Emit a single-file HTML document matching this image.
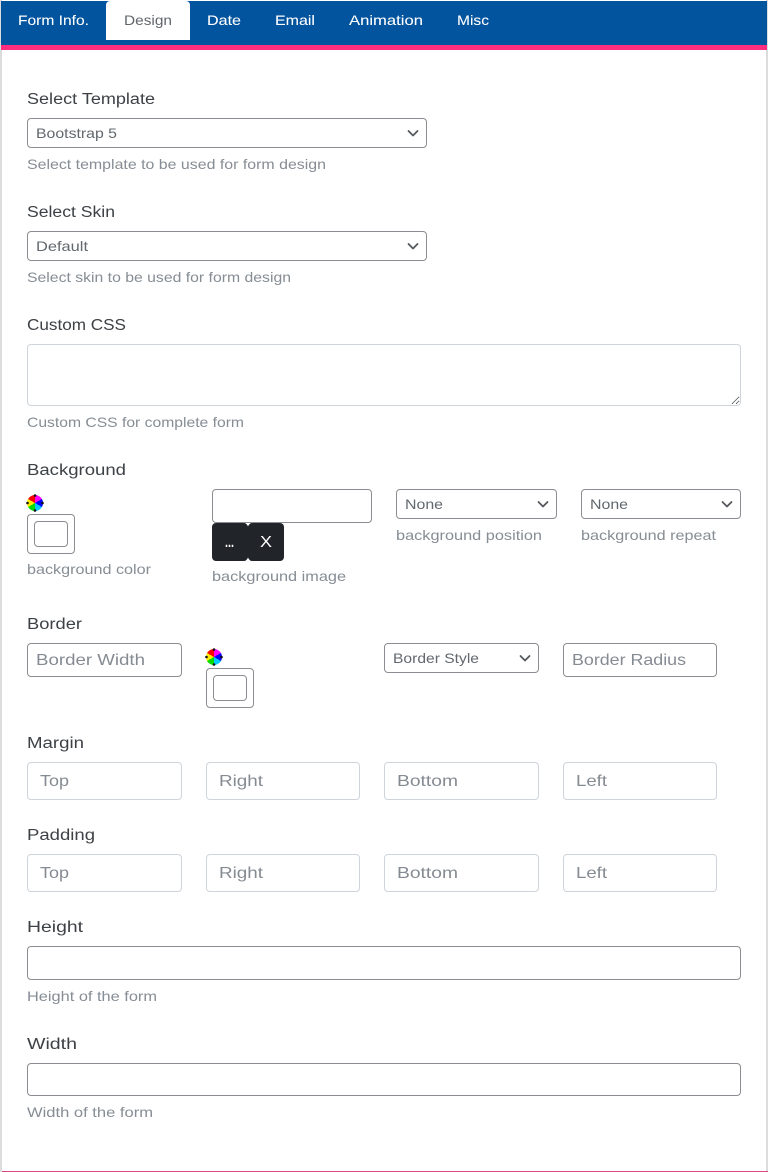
<!DOCTYPE html>
<html lang="en">
<head>
<meta charset="utf-8">
<title>Form Design</title>
<style>
html,body{margin:0;padding:0;background:#fff}
#p{position:relative;width:768px;height:1172px;overflow:hidden;background:#fff}
#p div,#p textarea{position:absolute;box-sizing:border-box}
.c{border:1px solid #8a8d91;border-radius:4px;background:#fff}
.l{border:1px solid #ced4da;border-radius:4px;background:#fff}
.w{width:16px;height:16px;border-radius:50%;background:conic-gradient(#f0f 0 60deg,#00f 60deg 120deg,#0cf 120deg 180deg,#0d0 180deg 240deg,#fe0 240deg 300deg,#f00 300deg 360deg)}
svg{position:absolute;left:0;top:0}
text{font-family:"Liberation Sans",sans-serif}
.lb{font-size:15.5px;fill:#3d4145}
.h{font-size:14px;fill:#868d94}
.t{font-size:14px;fill:#fff;stroke:#fff;stroke-width:.05px}
.s{font-size:14px;fill:#62686e}
.ph{font-size:16px;fill:#858b92}
</style>
</head>
<body>
<div id="p">
<div style="left:0;top:0;width:768px;height:1172px;border-left:2px solid #dcdcdc;border-right:2px solid #dcdcdc"></div>
<div style="left:2px;top:1171px;width:766px;height:1px;background:#d9487f"></div>
<div style="left:1px;top:1px;width:766px;height:44px;background:#03549e"></div>
<div style="left:1px;top:45px;width:766px;height:5px;background:#ff2e7e"></div>
<div style="left:106px;top:1px;width:84px;height:39px;background:#fff;border-radius:4px 4px 0 0"></div>

<div class="c" style="left:27px;top:118px;width:400px;height:30px"></div>
<div class="c" style="left:27px;top:231px;width:400px;height:30px"></div>
<textarea style="left:27px;top:344px;width:714px;height:62px;border:1px solid #ced4da;border-radius:4px;background:#fff;outline:0;margin:0"></textarea>

<div class="c" style="left:27px;top:514px;width:48px;height:40px"></div>
<div class="c" style="left:34px;top:521px;width:34px;height:26px"></div>
<div class="w" style="left:27px;top:495px"></div>
<div class="c" style="left:212px;top:489px;width:160px;height:34px"></div>
<div style="left:212px;top:523px;width:36px;height:38px;background:#212529;border-radius:4px"></div>
<div style="left:248px;top:523px;width:36px;height:38px;background:#212529;border-radius:4px"></div>
<div class="c" style="left:396px;top:489px;width:161px;height:30px"></div>
<div class="c" style="left:581px;top:489px;width:160px;height:30px"></div>

<div class="c" style="left:27px;top:643px;width:155px;height:34px"></div>
<div class="c" style="left:206px;top:668px;width:48px;height:40px"></div>
<div class="c" style="left:213px;top:675px;width:34px;height:26px"></div>
<div class="w" style="left:206px;top:649px"></div>
<div class="c" style="left:384px;top:643px;width:155px;height:30px"></div>
<div class="c" style="left:563px;top:643px;width:154px;height:34px"></div>

<div class="l" style="left:27px;top:762px;width:155px;height:38px"></div>
<div class="l" style="left:206px;top:762px;width:154px;height:38px"></div>
<div class="l" style="left:384px;top:762px;width:155px;height:38px"></div>
<div class="l" style="left:563px;top:762px;width:154px;height:38px"></div>
<div class="l" style="left:27px;top:854px;width:155px;height:38px"></div>
<div class="l" style="left:206px;top:854px;width:154px;height:38px"></div>
<div class="l" style="left:384px;top:854px;width:155px;height:38px"></div>
<div class="l" style="left:563px;top:854px;width:154px;height:38px"></div>

<div class="c" style="left:27px;top:946px;width:714px;height:34px"></div>
<div class="c" style="left:27px;top:1063px;width:714px;height:33px"></div>

<svg width="768" height="1172" viewBox="0 0 768 1172" style="pointer-events:none">
<g fill="none" stroke="#555a5f" stroke-width="1.800" stroke-linecap="round" stroke-linejoin="round">
<path d="M408.500 131l4.500 4.500 4.500-4.500"/>
<path d="M408.500 244l4.500 4.500 4.500-4.500"/>
<path d="M538.500 502l4.500 4.500 4.500-4.500"/>
<path d="M722.500 502l4.500 4.500 4.500-4.500"/>
<path d="M520.500 656l4.500 4.500 4.500-4.500"/>
</g>
<g fill="#111">
<circle cx="35" cy="495.500" r="1.300"/><circle cx="35" cy="510.500" r="1.300"/><circle cx="27.500" cy="503" r="1.300"/><circle cx="42.500" cy="503" r="1.300"/>
<circle cx="214" cy="649.500" r="1.300"/><circle cx="214" cy="664.500" r="1.300"/><circle cx="206.500" cy="657" r="1.300"/><circle cx="221.500" cy="657" r="1.300"/>
</g>
<path d="M245.500 523h5l-2.500 3zM245.500 561h5l-2.500-3z" fill="#fff"/>

<text class="t" x="18" y="25" textLength="71" lengthAdjust="spacingAndGlyphs">Form Info.</text>
<text class="t" x="207" y="25" textLength="34" lengthAdjust="spacingAndGlyphs">Date</text>
<text class="t" x="275" y="25" textLength="40" lengthAdjust="spacingAndGlyphs">Email</text>
<text class="t" x="349" y="25" textLength="74" lengthAdjust="spacingAndGlyphs">Animation</text>
<text class="t" x="457" y="25" textLength="32" lengthAdjust="spacingAndGlyphs">Misc</text>
<text x="124" y="25" textLength="48" lengthAdjust="spacingAndGlyphs" style="font-size:14px;fill:#62676d">Design</text>

<text class="lb" x="27" y="104" textLength="128" lengthAdjust="spacingAndGlyphs">Select Template</text>
<text class="lb" x="27" y="217" textLength="88" lengthAdjust="spacingAndGlyphs">Select Skin</text>
<text class="lb" x="27" y="330" textLength="99" lengthAdjust="spacingAndGlyphs">Custom CSS</text>
<text class="lb" x="27" y="475" textLength="99" lengthAdjust="spacingAndGlyphs">Background</text>
<text class="lb" x="27" y="629" textLength="55" lengthAdjust="spacingAndGlyphs">Border</text>
<text class="lb" x="27" y="748" textLength="57" lengthAdjust="spacingAndGlyphs">Margin</text>
<text class="lb" x="27" y="840" textLength="68" lengthAdjust="spacingAndGlyphs">Padding</text>
<text class="lb" x="27" y="932" textLength="56" lengthAdjust="spacingAndGlyphs">Height</text>
<text class="lb" x="27" y="1049" textLength="50" lengthAdjust="spacingAndGlyphs">Width</text>

<text class="s" x="36" y="138" textLength="81" lengthAdjust="spacingAndGlyphs">Bootstrap 5</text>
<text class="s" x="36" y="251" textLength="52" lengthAdjust="spacingAndGlyphs">Default</text>
<text class="s" x="405" y="509" textLength="38" lengthAdjust="spacingAndGlyphs">None</text>
<text class="s" x="590" y="509" textLength="38" lengthAdjust="spacingAndGlyphs">None</text>
<text class="s" x="393" y="663" textLength="86" lengthAdjust="spacingAndGlyphs">Border Style</text>

<text class="h" x="27" y="169" textLength="299" lengthAdjust="spacingAndGlyphs">Select template to be used for form design</text>
<text class="h" x="27" y="282" textLength="264" lengthAdjust="spacingAndGlyphs">Select skin to be used for form design</text>
<text class="h" x="27" y="427" textLength="217" lengthAdjust="spacingAndGlyphs">Custom CSS for complete form</text>
<text class="h" x="27" y="574" textLength="124" lengthAdjust="spacingAndGlyphs">background color</text>
<text class="h" x="212" y="581" textLength="134" lengthAdjust="spacingAndGlyphs">background image</text>
<text class="h" x="396" y="540" textLength="146" lengthAdjust="spacingAndGlyphs">background position</text>
<text class="h" x="581" y="540" textLength="135" lengthAdjust="spacingAndGlyphs">background repeat</text>
<text class="h" x="27" y="1001" textLength="130" lengthAdjust="spacingAndGlyphs">Height of the form</text>
<text class="h" x="27" y="1117" textLength="126" lengthAdjust="spacingAndGlyphs">Width of the form</text>

<text x="225" y="547" textLength="9" lengthAdjust="spacingAndGlyphs" style="font-size:15px;font-weight:700;fill:#fff">...</text>
<text x="260" y="547" textLength="12" lengthAdjust="spacingAndGlyphs" style="font-size:16px;fill:#fff">X</text>

<text class="ph" x="36" y="665" textLength="109" lengthAdjust="spacingAndGlyphs">Border Width</text>
<text class="ph" x="572" y="665" textLength="114" lengthAdjust="spacingAndGlyphs">Border Radius</text>

<text class="ph" x="40" y="786" textLength="29" lengthAdjust="spacingAndGlyphs">Top</text>
<text class="ph" x="219" y="786" textLength="44" lengthAdjust="spacingAndGlyphs">Right</text>
<text class="ph" x="397" y="786" textLength="61" lengthAdjust="spacingAndGlyphs">Bottom</text>
<text class="ph" x="576" y="786" textLength="31" lengthAdjust="spacingAndGlyphs">Left</text>
<text class="ph" x="40" y="878" textLength="29" lengthAdjust="spacingAndGlyphs">Top</text>
<text class="ph" x="219" y="878" textLength="44" lengthAdjust="spacingAndGlyphs">Right</text>
<text class="ph" x="397" y="878" textLength="61" lengthAdjust="spacingAndGlyphs">Bottom</text>
<text class="ph" x="576" y="878" textLength="31" lengthAdjust="spacingAndGlyphs">Left</text>
</svg>
</div>
</body>
</html>
